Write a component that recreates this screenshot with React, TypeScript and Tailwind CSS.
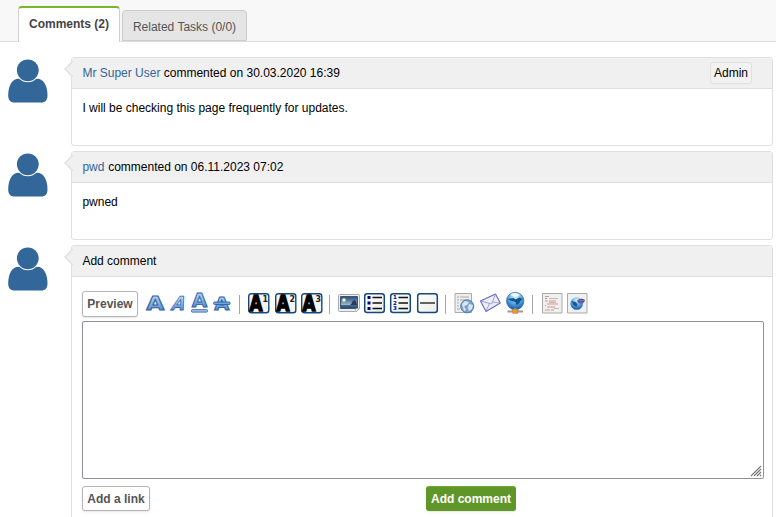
import React from "react";

function UserIcon() {
  return (
    <svg className="mt-[2px] h-[46px] w-[40px] shrink-0" viewBox="0 0 40 46">
      <path
        fill="#336699"
        d="M10.500 19.800 C4 19.800 .2 27 .2 36.500 C.2 41 2.500 43.600 6.500 43.600 H33.300 C37.300 43.600 39.500 41 39.500 36.500 C39.500 27 35.500 19.800 29.300 19.800Z"
      />
      <circle cx="19.800" cy="11.200" r="12" fill="#fff" />
      <circle cx="19.800" cy="11.300" r="10.900" fill="#336699" />
    </svg>
  );
}

function Entry({ header, children, tail = "h-[89px]" }: { header: React.ReactNode; children: React.ReactNode; tail?: string }) {
  return (
    <div className="flex pl-2 pr-[3px]">
      <UserIcon />
      <section className={`relative ml-[23px] min-w-0 grow rounded-[3px] border border-[#e0e0e0] bg-white ${tail}`}>
        <svg className="absolute -left-[8px] top-[3px] h-[16px] w-[9px]" viewBox="0 0 9 16">
          <path d="M9 0 L1 8 L9 16" fill="#f0f0f0" stroke="#e0e0e0" strokeWidth="1.500" />
        </svg>
        <header className="flex h-[31px] items-center rounded-t-[2px] border-b border-[#dedede] bg-[#f0f0f0] pl-[10.4px] pr-5">
          {header}
        </header>
        {children}
      </section>
    </div>
  );
}

function Icon({ w, m, children }: { w: number; m: string; children: React.ReactNode }) {
  return (
    <svg width={w} height="22" viewBox={`0 0 ${w} 22`} className={`mt-px shrink-0 overflow-visible ${m}`}>
      {children}
    </svg>
  );
}

function Divider({ m }: { m: string }) {
  return <span className={`mt-[4px] h-[19px] w-px shrink-0 bg-[#a5a5a5] ${m}`} />;
}

const letter = {
  fontFamily: "DejaVu Sans, sans-serif",
  fontWeight: 700,
  textAnchor: "middle" as const,
  fill: "url(#blue)",
  stroke: "#2f62a6",
  strokeWidth: 1,
};

function Heading({ n, m }: { n: string; m: string }) {
  return (
    <Icon w={22} m={m}>
      <rect x="0.700" y="1.700" width="20.100" height="19.100" rx="2.500" fill="#f4f3ef" stroke="#15477d" strokeWidth="1.400" />
      <text x="1.500" y="19.200" fontFamily="DejaVu Sans, sans-serif" fontWeight="700" fontSize="21" fill="#000" stroke="#000" strokeWidth="1.500" textLength="13" lengthAdjust="spacingAndGlyphs">A</text>
      <text x="14.600" y="9.500" fontFamily="DejaVu Sans, sans-serif" fontWeight="700" fontSize="8" fill="#222" textLength="5.500" lengthAdjust="spacingAndGlyphs">{n}</text>
    </Icon>
  );
}

function Frame() {
  return <rect x="0.700" y="1.700" width="19.600" height="18.800" rx="2.500" fill="url(#paper)" stroke="#15477d" strokeWidth="1.500" />;
}

function Page() {
  return <path d="M.5 1.500h19.500v19.500H.5z" fill="#f0f0ef" stroke="#aaa" strokeWidth="1" />;
}

function Toolbar() {
  return (
    <div className="flex h-[26px] items-start">
      <svg width="0" height="0" className="absolute">
        <defs>
          <linearGradient id="blue" x1="0" y1="0" x2="0" y2="1">
            <stop offset="0.200" stopColor="#b5d5f2" />
            <stop offset="0.900" stopColor="#4a83c8" />
          </linearGradient>
          <linearGradient id="paper" x1="0" y1="0" x2="1" y2="1">
            <stop offset="0" stopColor="#fff" />
            <stop offset="1" stopColor="#ebebe6" />
          </linearGradient>
          <linearGradient id="photo" x1="0" y1="0" x2="0" y2="1">
            <stop offset="0" stopColor="#264b78" />
            <stop offset="0.700" stopColor="#a3b9cf" />
            <stop offset="0.720" stopColor="#4b698b" />
            <stop offset="1" stopColor="#294668" />
          </linearGradient>
          <radialGradient id="globe" cx="0.500" cy="0.250" r="0.750">
            <stop offset="0" stopColor="#d7f4ff" />
            <stop offset="0.450" stopColor="#67b6eb" />
            <stop offset="1" stopColor="#1154a3" />
          </radialGradient>
        </defs>
      </svg>
      <button className="h-[26px] w-[56px] shrink-0 rounded-[3px] border border-[#b5b5b5] bg-white font-bold text-[#555] shadow-[0_1px_2px_#0000001a]">Preview</button>
      <Icon w={20} m="ml-2">
        <text {...letter} x="9.200" y="18.300" fontSize="19" textLength="18" lengthAdjust="spacingAndGlyphs">A</text>
      </Icon>
      <Icon w={19} m="ml-[3px]">
        <text {...letter} x="9" y="18.300" fontSize="19" transform="translate(5.500 0) skewX(-20)" textLength="13" lengthAdjust="spacingAndGlyphs" strokeWidth=".8">A</text>
      </Icon>
      <Icon w={18} m="ml-[3px]">
        <text {...letter} x="8.500" y="14.700" fontSize="19" textLength="15.500" lengthAdjust="spacingAndGlyphs" strokeWidth="0.900">A</text>
        <rect x=".5" y="17.700" width="16" height="2.400" rx=".8" fill="#a9cbed" stroke="#2f62a6" strokeWidth=".9" />
      </Icon>
      <Icon w={18} m="ml-1">
        <text {...letter} x="8.800" y="18.200" fontSize="18.500" textLength="15" lengthAdjust="spacingAndGlyphs">A</text>
        <rect x=".6" y="10" width="16.500" height="2.500" rx="1" fill="#75a5dc" stroke="#2f62a6" strokeWidth=".9" />
      </Icon>
      <Divider m="ml-2" />
      <Heading n="1" m="ml-2" />
      <Heading n="2" m="ml-[5px]" />
      <Heading n="3" m="ml-1" />
      <Divider m="ml-[6px]" />
      <Icon w={22} m="ml-2">
        <path d="M1.500 2.500h19q1 0 1 1v13l-3 3h-17q-1 0-1-1v-15q0-1 1-1z" fill="#eee" stroke="#aaa" />
        <path d="M2.500 4.500h17v12h-17z" fill="url(#photo)" stroke="#385778" />
        <circle cx="6" cy="8" r="1.700" fill="#fffbd2" />
        <path d="M12 13q2-1 2-3l2-2 2 1 1 4z" fill="#243e59" />
        <path d="M17.500 20l4-4-4 1z" fill="#fff" stroke="#aaa" strokeWidth=".7" />
      </Icon>
      <Icon w={21} m="ml-1">
        <Frame />
        <path d="M3.500 4h3v3h-3zM3.500 9.500h3v3h-3zM3.500 15h3v3h-3z" fill="#00008d" />
        <path d="M8.500 5.500H18M8.500 11H18M8.500 16.500H18" stroke="#111" strokeWidth="1.300" />
      </Icon>
      <Icon w={21} m="ml-[5px]">
        <Frame />
        <g fill="#00008d" fontFamily="DejaVu Sans, sans-serif" fontSize="5.500" fontWeight="700">
          <text x="3" y="7.300">1</text>
          <text x="3" y="12.800">2</text>
          <text x="3" y="18.300">3</text>
        </g>
        <path d="M8.500 5.500H18M8.500 11H18M8.500 16.500H18" stroke="#111" strokeWidth="1.300" />
      </Icon>
      <Icon w={21} m="ml-[6px]">
        <Frame />
        <path d="M3 11h15" stroke="#333" strokeWidth="1.500" />
      </Icon>
      <Divider m="ml-[7px]" />
      <Icon w={21} m="ml-2">
        <path d="M1 1.500h16.500V20.500H1z" fill="#eeeeec" stroke="#aaa" />
        <path d="M3 5h2m1 0h9M3 8h2m1 0h7M3 11h2M3 14h2M3 17h3" stroke="#aaa" strokeWidth="1" />
        <circle cx="13.200" cy="14.300" r="6.500" fill="#7aa4cf" stroke="#5278aa" />
        <path d="M8 12l3-3 4 1-2 3-3 1 2 4-2 1zM15 12l4 1-1 4-3 2-1-3z" fill="#dce7f0" />
      </Icon>
      <Icon w={22} m="ml-[5px]">
        <path d="M.5 9L15.500 2l4.800 9L6 19.500z" fill="#eceef9" stroke="#6569b5" strokeWidth="1.100" strokeLinejoin="round" />
        <path d="M.7 9l11 3L15.500 2M6 19l3.500-7.500M20 11l-7-1" fill="none" stroke="#8c8fca" strokeWidth=".8" />
      </Icon>
      <Icon w={21} m="ml-[3px]">
        <circle cx="10.200" cy="9" r="8.700" fill="url(#globe)" stroke="#3467a0" strokeWidth=".7" />
        <path d="M2.500 7l6-1 2 1.500 4-2 3 1.500-2 2-2 3-2 1-1-3-4-1z" fill="#16528d" />
        <path d="M5 3q5-4 10 0l-4 2z" fill="#effbff" />
        <path d="M10.200 16v3M2.500 19.500h15.500" stroke="#999" strokeWidth="1.800" />
        <rect x="7.800" y="17.200" width="5" height="4" fill="#f59a2d" stroke="#c57928" strokeWidth=".7" />
      </Icon>
      <Divider m="ml-[6px]" />
      <Icon w={21} m="ml-[9px]">
        <Page />
        <path d="M3 4.500h4M3 9h3m1 0h7M5 12h11M5 15h8M3 18h5" stroke="#e68f8f" />
        <path d="M7 6.500h9M7 10.500h7M12 16.500h5" stroke="#c5b8bd" />
        <path d="M3 6.500h2M3 13.500h1M9 18h3" stroke="#93a994" />
      </Icon>
      <Icon w={21} m="ml-1">
        <Page />
        <circle cx="9.700" cy="11.500" r="6.300" fill="url(#globe)" />
        <path d="M4.500 9l4 1 2 2-1 3-3-2z" fill="#23558b" />
        <path d="M10 8.500q4-3 8-.5l-1 2.500q-4 2-6 0z" fill="#505099" />
        <path d="M11 8.500h6M12 10h4" stroke="#8d7aac" strokeWidth=".7" />
      </Icon>
    </div>
  );
}

export default function App() {
  return (
    <main className="h-[517px] overflow-hidden bg-white font-['Liberation_Sans',Arial,sans-serif] text-[12px] leading-[15px] text-black">
      <nav className="flex h-[42px] items-end border-b border-[#ddd] bg-[#f8f8f8] pl-[18px]">
        <div className="-mb-px flex h-[36px] w-[102px] items-center justify-center rounded-t-[4px] border-x border-t-2 border-x-[#d0d0d0] border-t-[#77b82a] bg-white pb-px font-bold text-[#444]">
          Comments (2)
        </div>
        <div className="ml-[2px] flex h-[31px] w-[125px] items-center justify-center rounded-t-[4px] border border-[#ccc] bg-[#e5e5e5] pt-[3px] text-[#555]">
          Related Tasks (0/0)
        </div>
      </nav>
      <div className="flex flex-col gap-[5px] pt-[15px]">
        <Entry
          header={
            <>
              <span><a className="text-[#336699]">Mr Super User</a> commented on 30.03.2020 16:39</span>
              <span className="ml-auto flex h-[22px] w-[42px] items-center justify-center rounded-[3px] border border-[#e0e0e0] bg-[#f2f2f2]">Admin</span>
            </>
          }
        >
          <p className="px-[10.4px] pt-3">I will be checking this page frequently for updates.</p>
        </Entry>
        <Entry header={<span><a className="mr-[0.4px] text-[#336699]">pwd</a> commented on 06.11.2023 07:02</span>}>
          <p className="px-[10.4px] pt-3">pwned</p>
        </Entry>
        <Entry header="Add comment" tail="h-[290px]">
          <div className="px-[10px] pt-[14px]">
            <Toolbar />
            <div className="relative mt-[4px] h-[158px] w-[682px]">
              <textarea className="block h-full w-full resize-none rounded-[2px] border border-[#8f8f9d] bg-white" />
              <svg className="absolute bottom-[2px] right-[2px]" width="12" height="12" viewBox="0 0 12 12">
                <path d="M1 11L11 1M4 11L11 4M7 11L11 7M10 11L11 10" stroke="#777" strokeWidth="1.100" />
              </svg>
            </div>
            <div className="mt-[7px] flex">
              <button className="h-[25px] w-[68px] rounded-[3px] border border-[#b5b5b5] bg-white pt-px font-bold text-[#555] shadow-[0_1px_2px_#0000001a]">Add a link</button>
              <button className="ml-[276px] h-[25px] w-[90px] rounded-[3px] border border-[#5c9a24] border-t-[#6fac35] bg-[#5f9627] pt-px font-bold text-white shadow-[0_1px_2px_#0000001a]">Add comment</button>
            </div>
          </div>
        </Entry>
      </div>
    </main>
  );
}
